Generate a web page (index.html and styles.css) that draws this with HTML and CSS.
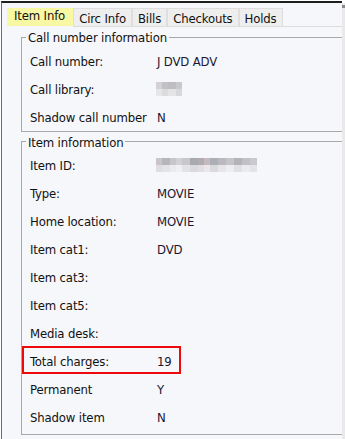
FILE: index.html
```html
<!DOCTYPE html>
<html>
<head>
<meta charset="utf-8">
<link rel="stylesheet" href="styles.css">
</head>
<body>
<div class="screen">
  <div class="window">
    <div class="tabs">
      <div class="tab active">Item Info</div>
      <div class="tab">Circ Info</div>
      <div class="tab">Bills</div>
      <div class="tab">Checkouts</div>
      <div class="tab">Holds</div>
    </div>
    <fieldset class="group first">
      <legend>Call number information</legend>
      <div class="row"><span class="label">Call number:</span><span class="value">J DVD ADV</span></div>
      <div class="row"><span class="label">Call library:</span><span class="value"><span class="blur short"></span></span></div>
      <div class="row"><span class="label">Shadow call number</span><span class="value">N</span></div>
    </fieldset>
    <fieldset class="group second">
      <legend>Item information</legend>
      <div class="row"><span class="label">Item ID:</span><span class="value"><span class="blur long"></span></span></div>
      <div class="row"><span class="label">Type:</span><span class="value">MOVIE</span></div>
      <div class="row"><span class="label">Home location:</span><span class="value">MOVIE</span></div>
      <div class="row"><span class="label">Item cat1:</span><span class="value">DVD</span></div>
      <div class="row"><span class="label">Item cat3:</span><span class="value"></span></div>
      <div class="row"><span class="label">Item cat5:</span><span class="value"></span></div>
      <div class="row"><span class="label">Media desk:</span><span class="value"></span></div>
      <div class="row highlight"><span class="label">Total charges:</span><span class="value">19</span></div>
      <div class="row"><span class="label">Permanent</span><span class="value">Y</span></div>
      <div class="row"><span class="label">Shadow item</span><span class="value">N</span></div>
    </fieldset>
  </div>
  <div class="scroll"><div class="thumb"></div></div>
</div>
</body>
</html>
```
FILE: styles.css
```css
html, body {
  margin: 0;
  padding: 0;
  background: #ffffff;
  overflow: hidden;
}
.screen {
  display: flex;
  width: 345px;
  height: 439px;
  padding-top: 1px;
  box-sizing: border-box;
}
.window {
  width: 341px;
  margin-left: 1px;
  border-top: 2px solid #1e1e1e;
  border-left: 1px solid #6e6e6e;
  background: #f6f7fb;
  box-sizing: border-box;
  overflow: hidden;
  padding: 5px 0 0 5px;
  font-family: "DejaVu Sans Condensed", "DejaVu Sans", sans-serif;
  font-stretch: semi-condensed;
  font-size: 13px;
  letter-spacing: -0.15px;
  color: #111;
}
.scroll {
  width: 3px;
  background: #e9e9ec;
  border-top: 2px solid #ffffff;
}
.thumb {
  height: 3px;
  margin-top: 2px;
  background: #8a8a8a;
}
.tabs {
  display: flex;
  border-bottom: 1px solid #dcdcdc;
  width: 400px;
}
.tab {
  height: 18px;
  line-height: 18px;
  padding: 1px 5px 0 5px;
  background: #eeeeee;
  border: 1px solid #dedede;
  border-bottom: none;
  box-sizing: border-box;
  white-space: nowrap;
}
.tab.active {
  height: 18px;
  line-height: 16px;
  padding: 0 8px 0 7px;
  background: #f7f7a4;
  border: none;
  margin-bottom: -1px;
  border-bottom: 1px solid #f6f7fb;
  box-sizing: content-box;
}
.group {
  margin: 0 0 0 14px;
  width: 360px;
  border: 1px solid #a8a8a8;
  padding: 0 0 0 4px;
  box-sizing: border-box;
}
.group legend {
  padding: 0 2px;
  color: #111;
}
.group.first {
  margin-top: 2px;
  padding-top: 1px;
}
.group.first legend {
  line-height: 17px;
}
.group.second {
  margin-top: 0;
  padding-top: 1px;
  padding-bottom: 3px;
}
.group.second legend {
  line-height: 14px;
  padding-top: 4px;
}
.row {
  position: relative;
  display: flex;
  align-items: center;
  height: 28px;
  margin-left: -4px;
}
.label {
  width: 127px;
  padding-left: 8px;
  flex: none;
}
.value {
  color: #1a1530;
  display: flex;
  align-items: center;
}
.highlight::after {
  content: "";
  position: absolute;
  left: 0;
  top: -1px;
  width: 159px;
  height: 28px;
  border: 2px solid #ee0a0a;
  box-sizing: border-box;
}
.blur {
  display: block;
  height: 14px;
  margin-left: -1px;
  background-repeat: no-repeat;
  background-size: 100% 7px, 100% 7px;
  background-position: top left, bottom left;
}
.blur.short {
  width: 26px;
  background-image:
    linear-gradient(to right, #d4d0d4 0 6px, #c2c2c6 6px 12px, #bdbdc2 12px 20px, #c9c9cd 20px 26px),
    linear-gradient(to right, #e6e6ea 0 6px, #dcdcdf 6px 12px, #e4e4e7 12px 20px, #d8d8dc 20px 26px);
}
.blur.long {
  width: 101px;
  background-image:
    linear-gradient(to right, #cbc4c8 0 6px, #b6b6bc 6px 14px, #c6c6cb 14px 20px, #d2d2d6 20px 26px, #c8c8cc 26px 34px, #a9a9b1 34px 42px, #b2acb2 42px 48px, #c3bbc0 48px 54px, #aeaeb6 54px 62px, #b9b9bf 62px 70px, #c4c4c9 70px 78px, #b3b3ba 78px 86px, #c0c0c6 86px 94px, #c9c9ce 94px 101px),
    linear-gradient(to right, #dedde1 0 6px, #e4e4e8 6px 14px, #ebebee 14px 20px, #f0f0f2 20px 26px, #e3e3e7 26px 34px, #d9d9de 34px 42px, #e2dfe3 42px 48px, #eae6e9 48px 54px, #dadade 54px 62px, #e6e6ea 62px 70px, #eeeef1 70px 78px, #e1e1e5 78px 86px, #ebebee 86px 94px, #e4e4e8 94px 101px);
}
```
